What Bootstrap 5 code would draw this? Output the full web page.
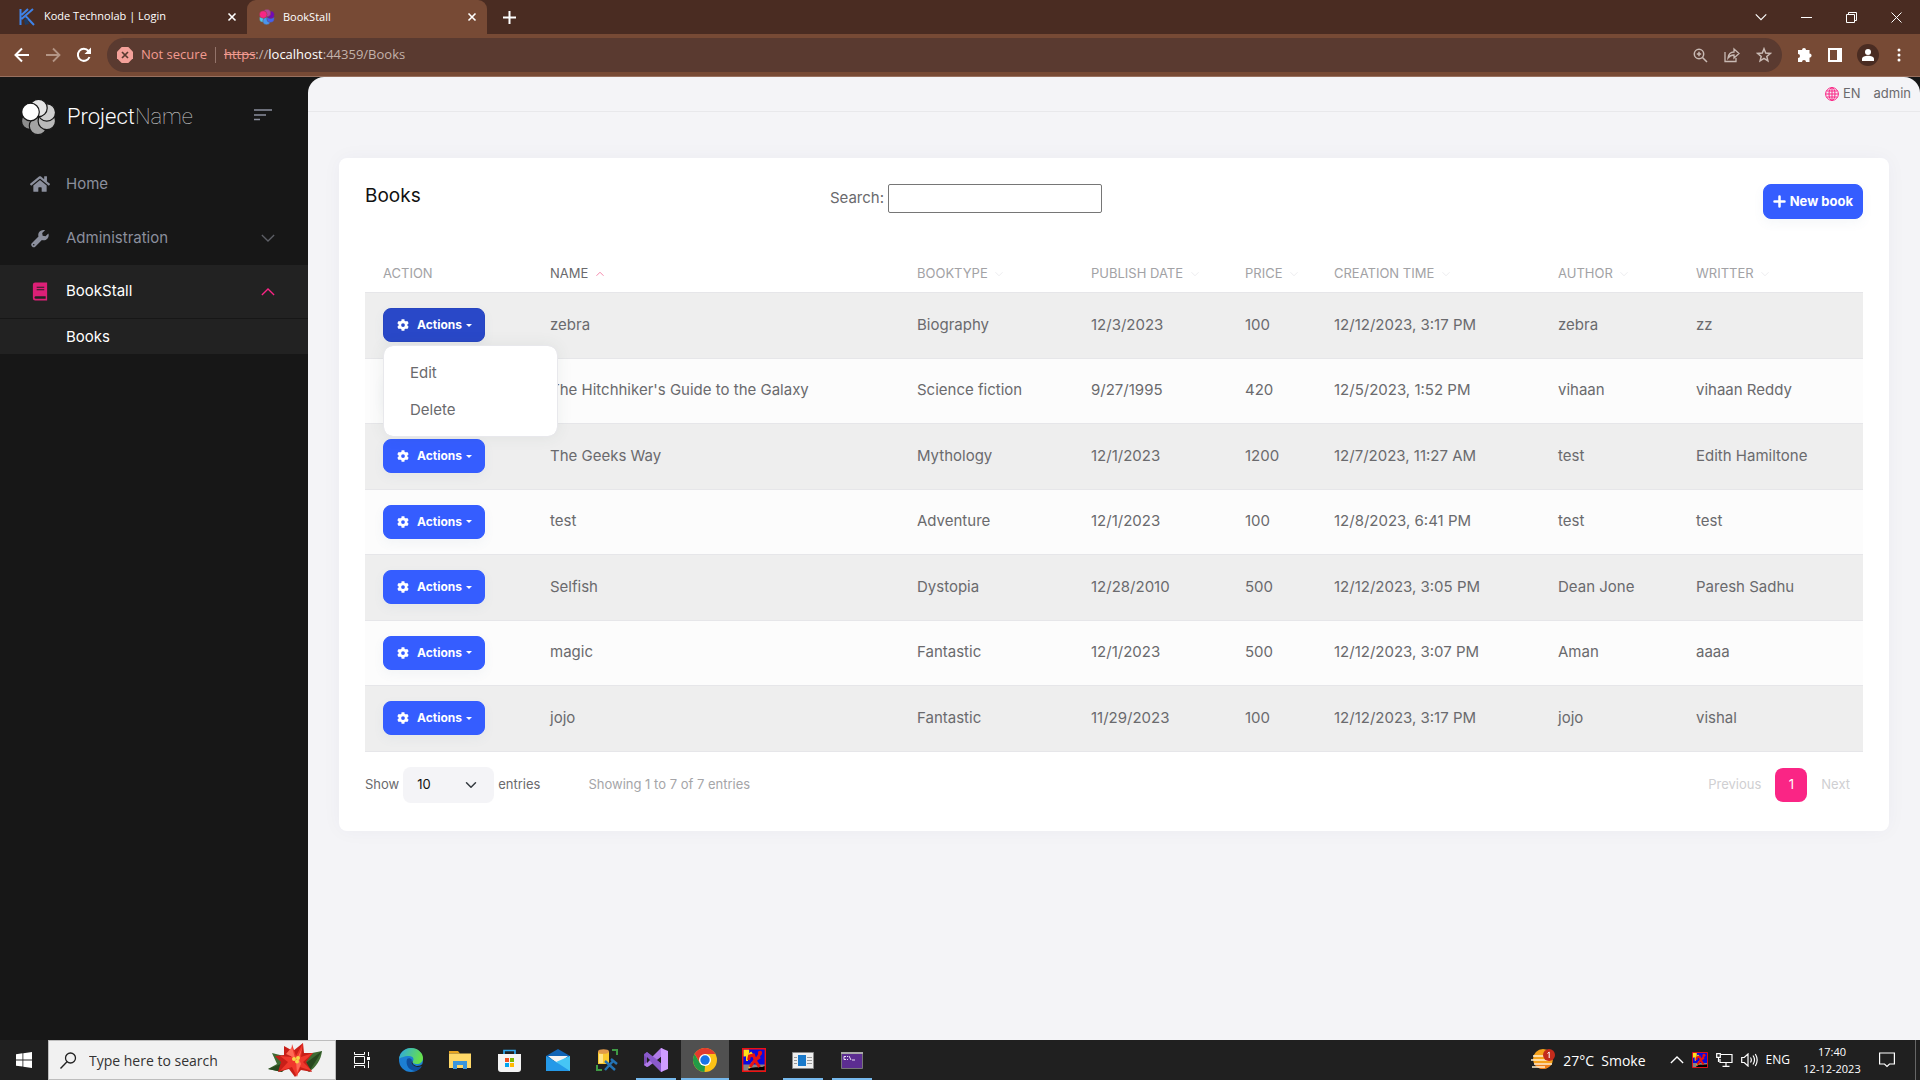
<!DOCTYPE html>
<html lang="en">
<head>
<meta charset="utf-8">
<meta name="viewport" content="width=device-width, initial-scale=1">
<title>BookStall</title>
<link rel="stylesheet" href="https://cdn.jsdelivr.net/npm/bootstrap@5.3.0/dist/css/bootstrap.min.css">
<style>
body{font-family:Inter,"Liberation Sans",sans-serif;font-size:15px;color:#6a6a6d;background:#171717;min-height:100vh}
svg{display:block;flex:none}
button,a{color:inherit;text-decoration:none}
.plain{background:none;border:0;padding:0;color:inherit}
.os{font-family:"Open Sans","Noto Sans",sans-serif}
/* browser frame */
.tabstrip{height:34px;background:#4a2c22;color:#fff;font-size:11px}
.tab-item{height:34px;padding:0 10px 0 18px;gap:8px}
.tab-first{width:247px;padding-bottom:1px}
.tab-active{width:240px;background:#774a35;border-radius:9px 9px 0 0;padding-left:12px}
.win-btns{gap:30px;padding-right:18px}
.toolbar{height:43px;background:#774a35;border-bottom:1px solid #98705f;color:#fff;padding:0 16px 0 14px;gap:15px}
.omnibox{height:34px;border-radius:17px;background:#5a3a30;font-size:13px;color:#c3b2ab;padding:0 10px}
.warn{color:#f29b91}
.sep{width:1px;height:16px;background:#93736a}
/* sidebar */
.sidebar{width:308px;color:#8b8f9d;font-size:15px}
.brand{padding:22px 36px 0 22px;height:80px}
.brand-text{font-family:Roboto,sans-serif;font-weight:300;font-size:22px;line-height:36px;color:#fff}
.brand-text span{font-weight:100;color:#ccc}
.side-toggle{margin-top:10px}
.side-link{height:54px;padding:0 33px 0 30px}
.side-link .ico{width:36px}
.side-link .dim{color:#5d5f66}
.side-open{background:#222;color:#fff;border-bottom:1px solid #171717}
.side-sub{height:35px;background:#222;color:#fff;padding:2px 0 0 66px}
/* page */
.page{background:#f4f4f7;border-radius:16px 16px 0 0;min-width:0}
.topbar{height:35px;border-bottom:1px solid #e8e8eb;font-size:13px;padding-right:9px;gap:13px}
.panel{background:#fff;border-radius:8px;margin:46px 31px 0;padding:26px 26px 28px;box-shadow:0 0 20px rgba(60,60,90,.04)}
.panel h1{font-size:19px;line-height:24px;color:#111;font-weight:400;margin:0}
.find-wrap{padding-right:12px}
.find{width:214px;height:29px;border:1px solid #767676;border-radius:2px;background:#fff}
.btn-main{--bs-btn-color:#fff;--bs-btn-bg:#355dff;--bs-btn-border-color:#355dff;--bs-btn-hover-color:#fff;--bs-btn-hover-bg:#2948cc;--bs-btn-hover-border-color:#2948cc;--bs-btn-active-color:#fff;--bs-btn-active-bg:#2948c8;--bs-btn-active-border-color:#2745c0;--bs-btn-border-radius:8px;font-weight:700;box-shadow:0 4px 12px rgba(90,120,160,.06)}
.btn-new{height:35px;padding:0 9px;font-size:13px}
.btn-act{width:102px;height:34px;padding:0 13px;font-size:12px}
.btn-act .caret{width:0;height:0;border:3px solid transparent;border-top-color:#fff;border-bottom:0;margin-left:4px}
.books{table-layout:fixed;width:100%;margin-top:36px;border-collapse:collapse}
.books th{height:37px;font-size:13px;font-weight:400;color:#a2a2a5;padding:0 0 0 18px;border-bottom:1px solid #e6e6e9;white-space:nowrap}
.books th.sorted{color:#6a6a6d}
.books th svg{display:inline-block;margin-left:4px}
.books td{padding:0 0 0 18px;height:65px;border-bottom:1px solid #e6e6e9;background:#fcfcfc;white-space:nowrap}
.books tr:nth-child(odd) td{background:#eee;height:66px}
.act-menu{--bs-dropdown-min-width:175px;--bs-dropdown-border-radius:10px;--bs-dropdown-border-color:#e8e8ec;--bs-dropdown-padding-y:8px;--bs-dropdown-link-color:#6a6a6d;--bs-dropdown-item-padding-x:26px;--bs-dropdown-font-size:15px;top:100%;margin-top:3px;box-shadow:0 0 16px rgba(60,90,80,.08)}
.act-menu .dropdown-item{height:37px;line-height:37px;padding-top:0;padding-bottom:0}
.list-foot{margin-top:15px;font-size:13px}
.size-pick{width:91px;height:36px;border:0;border-radius:8px;background-color:#f4f4f7;font-size:13px;padding:0 0 0 14px;color:#111;background-size:14px 12px;background-position:right 16px center}
.soft{color:#a5a5a8}
.faint{color:#cfcfd2}
.pages{gap:14px;padding-right:13px}
.page-num{width:32px;height:34px;border-radius:8px;background:#fa2585;color:#fff}
/* taskbar */
.taskbar{height:40px;background:#202020;color:#fff}
.start{width:48px}
.tb-search{width:288px;background:#f1f1f1;border:1px solid #bdbdbd;padding:0 13px 0 11px}
.tb-search input{flex:1;min-width:0;border:0;background:none;outline:0;font-size:14px;color:#333;padding:0}
.tb-search input::placeholder{color:#333;opacity:1}
.apps{gap:1px;padding-left:2px}
.app{width:48px;height:40px;border:0;background:none;padding:0}
.app-run{background:linear-gradient(#76b9ed,#76b9ed) center bottom/40px 2px no-repeat}
.app-on{background:linear-gradient(#76b9ed,#76b9ed) center bottom/48px 2px no-repeat #505050}
.tray{font-size:12px;padding-right:4px;gap:8px}
.weather{font-size:14px}
.clock{font-size:11px;line-height:17px;width:60px;text-align:center;white-space:nowrap;margin:0 9px 0 4px}
.peek{width:1px;height:40px;background:#666;margin-left:12px}
</style>
<script src="https://cdn.jsdelivr.net/npm/bootstrap@5.3.0/dist/js/bootstrap.bundle.min.js"></script>
</head>
<body class="d-flex flex-column">
<svg width="0" height="0" class="position-absolute" aria-hidden="true">
<symbol id="gear" viewBox="0 0 512 512"><path fill="currentColor" d="M487 316l-43-25c5-23 5-47 0-70l43-25c5-3 7-9 6-14-11-36-30-68-55-95-4-4-10-5-15-2l-43 25c-18-15-39-27-61-35V25c0-6-4-11-9-12-36-8-73-8-108 0-6 1-10 6-10 12v50c-22 8-43 20-61 35L88 85c-5-3-11-2-15 2-25 27-44 59-55 95-2 5 1 11 6 14l43 25c-5 23-5 47 0 70l-43 25c-5 3-7 9-6 14 11 36 30 68 55 95 4 4 10 5 15 2l43-25c18 15 39 27 61 35v50c0 6 4 11 9 12 36 8 73 8 108 0 6-1 10-6 10-12v-50c22-8 43-20 61-35l43 25c5 3 11 2 15-2 25-27 44-59 55-95 1-5-1-11-6-14zM256 336a80 80 0 1 1 0-160 80 80 0 0 1 0 160z"/></symbol>
<symbol id="down" viewBox="0 0 16 16"><path fill="none" stroke="currentColor" stroke-width="1.500" d="M1 4.500l7 7 7-7"/></symbol>
<symbol id="up" viewBox="0 0 16 16"><path fill="none" stroke="currentColor" stroke-width="1.500" d="M1 11.500l7-7 7 7"/></symbol>
<symbol id="cross" viewBox="0 0 10 10"><path stroke="currentColor" stroke-width="1.600" d="M1.500 1.500l7 7m0-7l-7 7"/></symbol>
<symbol id="runner" viewBox="0 0 24 24"><path fill="#0a0adf" d="M.7.7h22.600v22.600H.7z"/><path fill="#858585" d="M1 16.500h22V23H1z"/><path d="M6 21c4-3 13-1 17-3v4.500H7z"/><path fill="#ffe21a" d="M1.400 1.400H7c1 4-1 7-5.600 7.100z"/><path fill="none" stroke="#ffd21a" stroke-width="2" d="M5 13V8l4-3 3 4M7 20l4-6"/><path fill="none" stroke="#e81212" stroke-width="3" d="M6.500 12l1-4 4-1 2 6 4 6M8 19l5-7 5-3M14 12l4-6"/><circle cx="18" cy="5" r="2.200" fill="#e81212"/><path fill="none" stroke="#f01010" stroke-width="1.400" d="M.7.7h22.600v22.600H.7z"/></symbol>
</svg>

<header class="os">
  <div class="tabstrip d-flex align-items-center">
    <div class="tab-item tab-first d-flex align-items-center">
      <svg width="18" height="18" viewBox="0 0 18 18"><path fill="none" stroke="#3f83e8" stroke-width="2" d="M2.500 17V1M15 1L3.500 11M8 8.500l8 8.500M10 1L3.500 7"/><path fill="#203c63" d="M6 12l3-2 2 6-4 1z"/></svg>
      <span class="flex-grow-1">Kode Technolab | Login</span>
      <button class="plain" aria-label="Close tab"><svg width="10" height="10"><use href="#cross"/></svg></button>
    </div>
    <div class="tab-item tab-active d-flex align-items-center">
      <svg width="16" height="16" viewBox="0 0 34 36"><g stroke="#774a35" stroke-width="1"><circle cx="8" cy="22" r="8" fill="#4cc9f0"/><circle cx="16" cy="27" r="8.500" fill="#4895ef"/><circle cx="25" cy="22" r="8.500" fill="#4361ee"/><circle cx="25" cy="13" r="8.500" fill="#7209b7"/><circle cx="17" cy="9" r="8.500" fill="#b5449e"/><circle cx="8.500" cy="12.500" r="8.500" fill="#f72585"/></g></svg>
      <span class="flex-grow-1">BookStall</span>
      <button class="plain" aria-label="Close tab"><svg width="10" height="10"><use href="#cross"/></svg></button>
    </div>
    <button class="plain ms-3" aria-label="New tab"><svg width="13" height="13" viewBox="0 0 13 13"><path stroke="#fff" stroke-width="2" d="M6.500 0v13M0 6.500h13"/></svg></button>
    <div class="win-btns d-flex align-items-center ms-auto">
      <button class="plain me-1" aria-label="Tab search"><svg width="12" height="12"><use href="#down"/></svg></button>
      <button class="plain" aria-label="Minimize"><svg width="11" height="10"><path stroke="#fff" d="M0 5.500h11"/></svg></button>
      <button class="plain ms-1" aria-label="Restore"><svg width="11" height="11" viewBox="0 0 11 11"><path fill="none" stroke="#fff" d="M.5 2.500h8v8h-8zM2.500 2V.5h8v8H9"/></svg></button>
      <button class="plain ms-1" aria-label="Close"><svg width="11" height="11" viewBox="0 0 11 11"><path stroke="#fff" d="M.5.500l10 10m0-10l-10 10"/></svg></button>
    </div>
  </div>
  <div class="toolbar d-flex align-items-center">
    <button class="plain" aria-label="Back"><svg width="16" height="16" viewBox="0 0 16 16"><path fill="none" stroke="#fff" stroke-width="2" d="M15 8H2M8 1.500L1.500 8 8 14.500"/></svg></button>
    <button class="plain" aria-label="Forward"><svg width="16" height="16" viewBox="0 0 16 16"><path fill="none" stroke="#b49585" stroke-width="1.800" d="M1 8h13M8 1.500L14.500 8 8 14.500"/></svg></button>
    <button class="plain" aria-label="Reload"><svg width="16" height="16" viewBox="0 0 16 16"><path fill="none" stroke="#fff" stroke-width="2" d="M13.500 10A6 6 0 1 1 12.500 4"/><path fill="#fff" d="M15 .5v6.500H8.500z"/></svg></button>
    <div class="omnibox d-flex align-items-center flex-grow-1">
      <svg width="16" height="16" viewBox="0 0 16 16"><path fill="#f5a19a" d="M4.700 0h6.600L16 4.700v6.600L11.300 16H4.700L0 11.300V4.700z"/><path stroke="#5a3a30" stroke-width="1.700" d="M5 5l6 6m0-6l-6 6"/></svg>
      <span class="warn ms-2">Not secure</span><span class="sep mx-2"></span>
      <span><s class="warn">https</s>://<span class="text-white">localhost</span>:44359/Books</span>
      <span class="d-flex align-items-center gap-3 ms-auto">
        <svg width="15" height="15" viewBox="0 0 15 15"><g fill="none" stroke="#c9bab4" stroke-width="1.500"><circle cx="6" cy="6" r="4.700"/><path d="M9.500 9.500l4.500 4.500M6 3.800v4.400M3.800 6h4.400"/></g></svg>
        <svg width="16" height="16" viewBox="0 0 16 16"><path fill="none" stroke="#c9bab4" stroke-width="1.300" d="M1 5v9.500h11V11M4 11c.5-4 3-6 6-6V2l5 4.500L10 11V8C7 8 5.500 9 4 11z"/></svg>
        <svg width="16" height="16" viewBox="0 0 16 16"><path fill="none" stroke="#c9bab4" stroke-width="1.500" d="M8 1.800l1.700 4.300 4.600.3-3.500 3 1.100 4.500L8 11.400l-3.900 2.500 1.100-4.500-3.500-3 4.600-.3z"/></svg>
      </span>
    </div>
    <button class="plain" aria-label="Extensions"><svg width="16" height="16" viewBox="0 0 16 16"><path fill="#fff" d="M5 3a2 2 0 0 1 4 0h3.500v3.500a2 2 0 0 1 0 4.200V15H9a2 2 0 0 0-4 0H1v-4a2 2 0 0 0 0-4V3z"/></svg></button>
    <button class="plain" aria-label="Side panel"><svg width="14" height="14" viewBox="0 0 14 14"><path fill="#fff" fill-rule="evenodd" d="M0 0h14v14H0zM2 2v10h7V2z"/></svg></button>
    <button class="plain" aria-label="Profile"><svg width="22" height="22" viewBox="0 0 22 22"><circle cx="11" cy="11" r="11" fill="#4a2c22"/><circle cx="11" cy="8" r="3" fill="#fff"/><path fill="#fff" d="M5 17v-2c0-2 3-3.200 6-3.200s6 1.200 6 3.200v2z"/></svg></button>
    <button class="plain" aria-label="Menu"><svg width="10" height="14" viewBox="0 0 10 14"><g fill="#fff"><circle cx="5" cy="2" r="1.500"/><circle cx="5" cy="7" r="1.500"/><circle cx="5" cy="12" r="1.500"/></g></svg></button>
  </div>
</header>

<div class="d-flex flex-grow-1">
  <nav class="sidebar flex-shrink-0">
    <div class="brand d-flex align-items-start">
      <svg width="33" height="36" viewBox="0 0 33 36"><g stroke="#171717" stroke-width="1.200"><circle cx="7.800" cy="22" r="8.300" fill="#8c8c8c"/><circle cx="16" cy="27" r="8.700" fill="#a3a3a3"/><circle cx="24.800" cy="22" r="8.700" fill="#b9b9b9"/><circle cx="24.800" cy="13.500" r="8.700" fill="#cfcfcf"/><circle cx="16.500" cy="9" r="8.700" fill="#e4e4e4"/><circle cx="8.500" cy="13" r="8.800" fill="#fff"/></g></svg>
      <a href="#" class="brand-text flex-grow-1 ms-2 ps-1">Project<span>Name</span></a>
      <button class="plain side-toggle" aria-label="Toggle menu"><svg width="18" height="12" viewBox="0 0 18 12"><path stroke="#8b8f9d" stroke-width="1.500" d="M0 1h18M0 6h12M0 10.500h6"/></svg></button>
    </div>
    <a href="#" class="side-link d-flex align-items-center"><span class="ico"><svg width="20" height="18" viewBox="0 0 576 512"><path fill="currentColor" d="M280 148L96 300v164c0 9 7 16 16 16h112c9 0 16-7 16-16v-96c0-9 7-16 16-16h64c9 0 16 7 16 16v96c0 9 7 16 16 16h112c9 0 16-7 16-16V300L296 148c-5-4-11-4-16 0zM572 251l-84-69V44c0-7-5-12-12-12h-56c-7 0-12 5-12 12v72l-90-74c-17-14-43-14-60 0L4 251c-5 4-5 12-1 17l26 31c4 5 11 6 16 2L280 107c5-4 11-4 16 0l235 194c5 4 13 3 17-2l26-31c4-5 3-13-2-17z"/></svg></span>Home</a>
    <a href="#" class="side-link d-flex align-items-center"><span class="ico"><svg width="20" height="19" viewBox="0 0 20 20"><path fill="currentColor" d="M18.800 4.700L15.800 7.700 12.800 7.200 12.300 4.200 15.300 1.200C12.800.5 10 1.500 8.800 3.800 8 5.300 8 6.800 8.400 8L1.600 14.800a2.500 2.500 0 0 0 3.600 3.600L12 11.600c2 .7 4.500 0 5.900-1.700 1.300-1.400 1.600-3.500.9-5.200z"/><circle cx="3.400" cy="16.600" r=".8" fill="#171717"/></svg></span><span class="flex-grow-1">Administration</span><svg class="dim" width="14" height="14"><use href="#down"/></svg></a>
    <a href="#" class="side-link side-open d-flex align-items-center"><span class="ico"><svg width="20" height="19" viewBox="0 0 20 20"><path fill="#dd1f77" d="M5 .5h12.500V19.500H5A2.500 2.500 0 0 1 2.500 17V3A2.500 2.500 0 0 1 5 .5z"/><path stroke="#222" stroke-width="1.200" d="M6.500 5.500h8M6.500 8.200h8"/><path fill="#222" d="M5.500 15H16v2.500H5.500a1.200 1.200 0 0 1 0-2.500z"/></svg></span><span class="flex-grow-1">BookStall</span><svg width="14" height="14" color="#fa2585"><use href="#up"/></svg></a>
    <a href="#" class="side-sub d-flex align-items-center">Books</a>
  </nav>

  <main class="page flex-grow-1">
    <div class="topbar d-flex align-items-center justify-content-end">
      <a href="#" class="d-flex align-items-center"><svg class="me-1" width="14" height="14" viewBox="0 0 14 14"><g fill="none" stroke="#fa2585"><circle cx="7" cy="7" r="6.400"/><ellipse cx="7" cy="7" rx="3" ry="6.400"/><path d="M7 .5v13M.5 7h13M1.500 4h11M1.500 10h11"/></g></svg>EN</a>
      <a href="#">admin</a>
    </div>
    <section class="panel">
      <div class="row g-0 align-items-start">
        <div class="col-2"><h1>Books</h1></div>
        <div class="col-4 find-wrap d-flex align-items-center justify-content-end"><label for="find" class="me-1">Search:</label><input id="find" type="search" class="find"></div>
        <div class="col-6 text-end"><button class="btn btn-main btn-new"><span class="d-flex align-items-center gap-1"><svg width="13" height="13" viewBox="0 0 13 13"><path stroke="#fff" stroke-width="2.500" stroke-linecap="round" d="M6.500 1.500v10M1.500 6.500h10"/></svg>New book</span></button></div>
      </div>
      <table class="books">
        <colgroup><col style="width:167px"><col style="width:367px"><col style="width:174px"><col style="width:154px"><col style="width:89px"><col style="width:224px"><col style="width:138px"><col style="width:185px"></colgroup>
        <thead><tr id="heads"></tr></thead>
        <tbody id="rows"></tbody>
      </table>
      <div class="list-foot d-flex align-items-center">
        <label for="size">Show</label>
        <select id="size" class="form-select size-pick mx-1"><option>10</option><option>25</option></select>
        <span>entries</span>
        <span class="soft ms-5">Showing 1 to 7 of 7 entries</span>
        <div class="pages d-flex align-items-center ms-auto">
          <a href="#" class="faint">Previous</a>
          <a href="#" class="page-num d-flex align-items-center justify-content-center">1</a>
          <a href="#" class="faint">Next</a>
        </div>
      </div>
    </section>
  </main>
</div>

<footer class="taskbar os d-flex align-items-stretch">
  <button class="plain start d-flex align-items-center justify-content-center" aria-label="Start"><svg width="16" height="16" viewBox="0 0 16 16"><path fill="#fff" d="M0 2.200L6.500 1.300v6.200H0zM7.300 1.200L16 0v7.500H7.300zM0 8.400h6.500v6.200L0 13.700zM7.300 8.400H16V16l-8.700-1.200z"/></svg></button>
  <div class="tb-search d-flex align-items-center">
    <svg class="me-2" width="17" height="17" viewBox="0 0 17 17"><circle cx="10.500" cy="6" r="5" fill="none" stroke="#222" stroke-width="1.300"/><path stroke="#222" stroke-width="1.400" d="M7 9.800L.5 16.500"/></svg>
    <input class="ms-1" type="text" placeholder="Type here to search" aria-label="Type here to search">
    <svg width="54" height="34" viewBox="0 0 54 34"><path fill="#3f6b33" d="M0 26l9-5-5-11 12 3 4 10-6 6zM54 8l-15 3-6 10 8 8c7-5 12-12 13-21z"/><path fill="#27481f" d="M0 26l18-7-4 10zM54 8L38 20l3 9z"/><path fill="#c81f18" d="M16 3l9 5 10-8 1 10 9 0-7 9 6 10-11-2-6 7-6-8-11 3 3-10-6-6 9-1z"/><path fill="#f0382c" d="M24 1l4 12L35 0l-2 14 12-4-10 9 9 9-12-4-3 10-5-10-12 4 8-9-8-6 11 1z"/><path fill="#ff6a55" d="M24 4l3 11-9-4zM34 5l-3 11 2 5-4 9-1-12z"/><g fill="#f6d648"><circle cx="26" cy="16" r="2"/><circle cx="30" cy="15" r="2"/><circle cx="29" cy="18.500" r="2"/></g></svg>
  </div>
  <div class="apps d-flex">
    <button class="app d-flex align-items-center justify-content-center" aria-label="Task view"><svg width="16" height="16" viewBox="0 0 16 16"><path fill="none" stroke="#fff" d="M.5 0v2.500h10V0M.5 4.500h10v7H.5zM.5 16v-2.500h10V16M14.500 0v4M14.500 9v7"/><path fill="#fff" d="M13 5h3v3h-3z"/></svg></button>
    <button class="app d-flex align-items-center justify-content-center" aria-label="Edge"><svg width="24" height="24" viewBox="0 0 24 24"><defs><linearGradient id="eg" x1="0" y1="0" x2="1" y2=".3"><stop offset="0" stop-color="#2ba6e8"/><stop offset="1" stop-color="#66e04c"/></linearGradient></defs><circle cx="12" cy="12" r="12" fill="#1c7fd4"/><path fill="url(#eg)" d="M0 11C1 4 6 0 12 0c7 0 12 5 12 10 0 4-3 6-6 6-3 0-5-1-4-3 1-1 1-5-4-5-5 0-9 2-10 3z"/><path fill="#0f4f9e" d="M8 11c-2 7 3 12 9 12 3-1 5-3 6-5-4 2-8 1-10-2-1-1-1-3 0-4-1-2-4-2-5-1z"/><path fill="#202020" d="M13.500 12.500c-1 3 2 5.500 5 5.500 2 0 3.500-1 5-2l-.5 2c-4 2-8 1-10-2-1-1-.5-3 .5-3.500z"/></svg></button>
    <button class="app d-flex align-items-center justify-content-center" aria-label="File Explorer"><svg width="22" height="18" viewBox="0 0 22 18"><path fill="#e9a520" d="M0 0h9l2 2.500H0z"/><path fill="#ffd868" d="M0 2.500h22V17H0z"/><path fill="#3a96dd" d="M4 18v-8h14v8h-4v-4H8v4z"/></svg></button>
    <button class="app d-flex align-items-center justify-content-center" aria-label="Store"><svg width="23" height="23" viewBox="0 0 23 23"><path fill="none" stroke="#2ea7ee" stroke-width="1.700" d="M6 6V1.500h11V6"/><path fill="#f4f4f4" d="M0 5h23v15a3 3 0 0 1-3 3H3a3 3 0 0 1-3-3z"/><path fill="#f25022" d="M7 9h4v4H7z"/><path fill="#7fba00" d="M12 9h4v4h-4z"/><path fill="#00a4ef" d="M7 14h4v4H7z"/><path fill="#ffb900" d="M12 14h4v4h-4z"/></svg></button>
    <button class="app d-flex align-items-center justify-content-center" aria-label="Mail"><svg width="24" height="22" viewBox="0 0 24 22"><path fill="#0f63b5" d="M0 7l12-7 12 7v4H0z"/><path fill="#f3f3f3" d="M2 7h20l-10 8z"/><path fill="#2499e8" d="M0 7l12 7 12-7v15H0z"/><path fill="#46c5f5" d="M24 7v15L10 13z"/></svg></button>
    <button class="app d-flex align-items-center justify-content-center" aria-label="SQL Server Management Studio"><svg width="22" height="22" viewBox="0 0 22 22"><path fill="none" stroke="#3f9a45" stroke-width="2" d="M16 1h5v5M1 16v5h5"/><path fill="#fbc92f" d="M2 3h11v12H2z"/><ellipse cx="7.500" cy="2.500" rx="5.500" ry="2.300" fill="#e29a4b"/><path fill="#ffe58a" d="M3 5h4v9H3z"/><path stroke="#2473b4" stroke-width="2.400" d="M9 12l10 9M18 11l-9 10M15 10l6 5"/></svg></button>
    <button class="app app-run d-flex align-items-center justify-content-center" aria-label="Visual Studio"><svg width="24" height="24" viewBox="0 0 24 24"><path fill="#7b4bb5" d="M0 6l3-2 7 6.500L5 18l-2 1-3-2z"/><path fill="#b07be8" d="M0 17L17 0l2 1v7L5 18l-2 1z"/><path fill="#8a5acb" d="M3 4L19 16v7l-2 1L0 7z"/><path fill="#202020" d="M3 9l3 3-3 3zM18 8v8l-5-4z"/><path fill="#cf9cff" d="M17 0l7 3v18l-7 3z"/></svg></button>
    <button class="app app-on d-flex align-items-center justify-content-center" aria-label="Chrome"><svg width="24" height="24" viewBox="0 0 24 24"><circle cx="12" cy="12" r="12" fill="#fbc116"/><path fill="#e33b2e" d="M1.600 6A12 12 0 0 1 22.400 6H12l-5 9z"/><path fill="#229a47" d="M1.600 6l5.200 9L12 18l-.500 6A12 12 0 0 1 1.600 6z"/><circle cx="12" cy="12" r="6" fill="#fff"/><circle cx="12" cy="12" r="4.700" fill="#1a73e8"/></svg></button>
    <button class="app d-flex align-items-center justify-content-center" aria-label="Runner"><svg width="24" height="24"><use href="#runner"/></svg></button>
    <button class="app app-run d-flex align-items-center justify-content-center" aria-label="App window"><svg width="22" height="17" viewBox="0 0 22 17"><path fill="#eee" stroke="#888" d="M.5.5h21v16H.5z"/><path fill="#1979ca" d="M6 3h8v11H6z"/><path stroke="#999" d="M2 5.500h3M2 8.500h3M2 11.500h3M15 5.500h5M15 8.500h5M15 11.500h5"/></svg></button>
    <button class="app app-run d-flex align-items-center justify-content-center" aria-label="Command prompt"><svg width="22" height="17" viewBox="0 0 22 17"><path fill="#5c2d91" stroke="#777" d="M.5.5h21v16H.5z"/><path fill="#aaa" d="M0 0h22v2H0z"/><path fill="none" stroke="#e8dcf5" d="M5 4.500H3v3h2M6.500 4v1M6.500 7v1M8 4l2 4M11 8h3"/></svg></button>
  </div>
  <div class="tray d-flex align-items-center ms-auto">
    <svg width="24" height="22" viewBox="0 0 24 22"><circle cx="12" cy="10" r="10" fill="#f6a21c"/><path fill="#f07f1a" d="M3 14h18c-2 4-5 6-9 6s-7-2-9-6z"/><path stroke="#fff0cf" stroke-width="1.600" d="M2 7h13M0 11h18M3 15h18M1 18h13"/><circle cx="18" cy="6" r="6" fill="#c42b1c"/><path fill="none" stroke="#fff" d="M16.500 4.500L18.200 3v6"/></svg>
    <span class="weather">27°C&nbsp; Smoke</span>
    <svg class="ms-3" width="14" height="14"><use href="#up"/></svg>
    <svg width="16" height="16"><use href="#runner"/></svg>
    <svg width="17" height="14" viewBox="0 0 17 14"><path fill="none" stroke="#fff" stroke-width="1.200" d="M5 1.500h11v8H4V6M10 9.500v4M6.500 13.300h7M.7.700h3.600v3.600H.7zM2.500 4.500V9"/></svg>
    <svg width="17" height="14" viewBox="0 0 17 14"><path fill="none" stroke="#fff" stroke-width="1.200" d="M.7 4.500h2.500L7 1v12L3.200 9.500H.7zM9.500 4.500c1 1.500 1 3.500 0 5M12 2.500c2 3 2 6 0 9M14.300 1c2.500 4 2.500 8 0 12"/></svg>
    <span>ENG</span>
    <span class="clock">17:40<br>12-12-2023</span>
    <svg width="16" height="16" viewBox="0 0 16 16"><path fill="none" stroke="#fff" stroke-width="1.200" d="M.6 1h14.800v11H10.500L8 14.500 5.500 12H.6z"/></svg>
    <span class="peek"></span>
  </div>
</footer>
<script>
const heads=["Action","Name","BookType","Publish date","Price","Creation time","Author","Writter"];
document.getElementById("heads").innerHTML=heads.map((h,i)=>`<th scope="col" class="text-uppercase${i===1?" sorted":""}">${h}${i===0?"":i===1?' <svg width="8" height="8" color="#f0608f"><use href="#up"/></svg>':' <svg width="8" height="8" color="#e6e6ea"><use href="#down"/></svg>'}</th>`).join("");
const books=[
["zebra","Biography","12/3/2023","100","12/12/2023, 3:17 PM","zebra","zz"],
["The Hitchhiker's Guide to the Galaxy","Science fiction","9/27/1995","420","12/5/2023, 1:52 PM","vihaan","vihaan Reddy"],
["The Geeks Way","Mythology","12/1/2023","1200","12/7/2023, 11:27 AM","test","Edith Hamiltone"],
["test","Adventure","12/1/2023","100","12/8/2023, 6:41 PM","test","test"],
["Selfish","Dystopia","12/28/2010","500","12/12/2023, 3:05 PM","Dean Jone","Paresh Sadhu"],
["magic","Fantastic","12/1/2023","500","12/12/2023, 3:07 PM","Aman","aaaa"],
["jojo","Fantastic","11/29/2023","100","12/12/2023, 3:17 PM","jojo","vishal"]];
const menu='<ul class="dropdown-menu act-menu show"><li><a class="dropdown-item" href="#">Edit</a></li><li><a class="dropdown-item" href="#">Delete</a></li></ul>';
document.getElementById("rows").innerHTML=books.map((b,i)=>`<tr><td><div class="dropdown"><button class="btn btn-main btn-act d-flex align-items-center${i?"":" active"}"><svg class="me-2" width="12" height="12"><use href="#gear"/></svg>Actions<span class="caret"></span></button>${i?"":menu}</div></td>${b.map(c=>`<td>${c}</td>`).join("")}</tr>`).join("");
</script>
</body>
</html>
